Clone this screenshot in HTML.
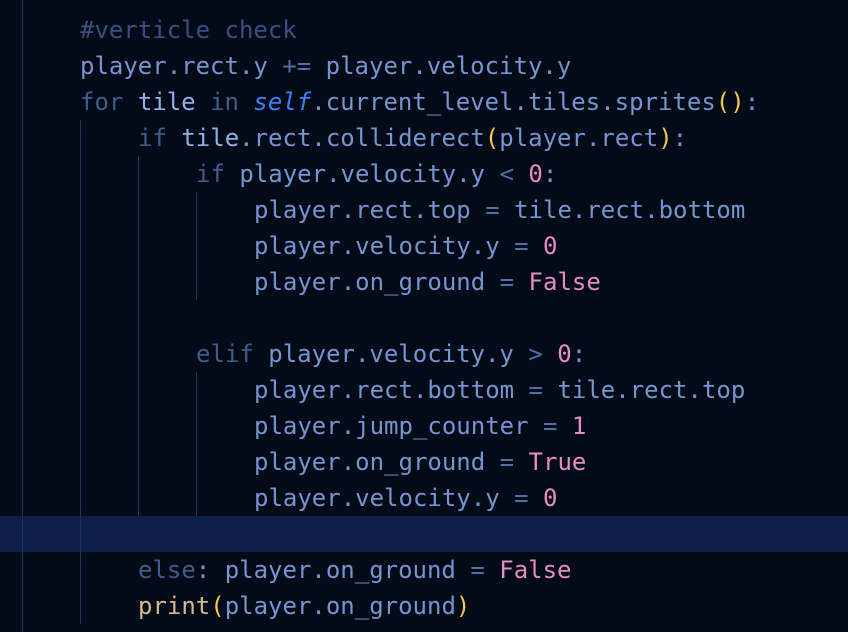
<!DOCTYPE html><html><head><style>
body{margin:0;width:848px;height:632px;background:#040b18;overflow:hidden;position:relative;font-family:"DejaVu Sans Mono","Liberation Mono",monospace;font-size:24px}
.l{position:absolute;left:0;height:36px;line-height:36px;white-space:pre;color:#7594d0}
.g{position:absolute;width:1px;background:#1d3358}
.k{color:#3f5d8c}.c{color:#3b4f82}.p{color:#e68bc4}.s{color:#3b82f6;font-style:italic}.y{color:#f2c94c}.f{color:#d6b78e}.o{color:#4f6fa8}.t{color:#8fb0e6}
</style></head><body>
<div style="position:absolute;left:0;top:516px;width:848px;height:36px;background:#0e1f4a"></div>
<div class="g" style="left:22px;top:0;height:632px"></div>
<div class="g" style="left:80px;top:120px;height:504px"></div>
<div class="g" style="left:138px;top:156px;height:360px"></div>
<div class="g" style="left:196px;top:192px;height:108px"></div>
<div class="g" style="left:196px;top:372px;height:144px"></div>
<div style="position:absolute;left:0;top:0;width:848px">
<div class="l" style="top:12px;left:80px"><span class="c">#verticle check</span></div>
<div class="l" style="top:48px;left:80px">player.rect.y <span class="o">+=</span> player.velocity.y</div>
<div class="l" style="top:84px;left:80px"><span class="k">for</span> <span class="t">tile</span> <span class="k">in</span> <span class="s">self</span>.current_level.tiles.sprites<span class="y">()</span>:</div>
<div class="l" style="top:120px;left:138px"><span class="k">if</span> <span class="t">tile</span>.rect.colliderect<span class="y">(</span>player.rect<span class="y">)</span>:</div>
<div class="l" style="top:156px;left:196px"><span class="k">if</span> player.velocity.y <span class="o">&lt;</span> <span class="p">0</span>:</div>
<div class="l" style="top:192px;left:254px">player.rect.top <span class="o">=</span> tile.rect.bottom</div>
<div class="l" style="top:228px;left:254px">player.velocity.y <span class="o">=</span> <span class="p">0</span></div>
<div class="l" style="top:264px;left:254px">player.on_ground <span class="o">=</span> <span class="p">False</span></div>
<div class="l" style="top:336px;left:196px"><span class="k">elif</span> player.velocity.y <span class="o">&gt;</span> <span class="p">0</span>:</div>
<div class="l" style="top:372px;left:254px">player.rect.bottom <span class="o">=</span> tile.rect.top</div>
<div class="l" style="top:408px;left:254px">player.jump_counter <span class="o">=</span> <span class="p">1</span></div>
<div class="l" style="top:444px;left:254px">player.on_ground <span class="o">=</span> <span class="p">True</span></div>
<div class="l" style="top:480px;left:254px">player.velocity.y <span class="o">=</span> <span class="p">0</span></div>
<div class="l" style="top:552px;left:138px"><span class="k">else</span>: player.on_ground <span class="o">=</span> <span class="p">False</span></div>
<div class="l" style="top:588px;left:138px"><span class="f">print</span><span class="y">(</span>player.on_ground<span class="y">)</span></div>
</div>
</body></html>
